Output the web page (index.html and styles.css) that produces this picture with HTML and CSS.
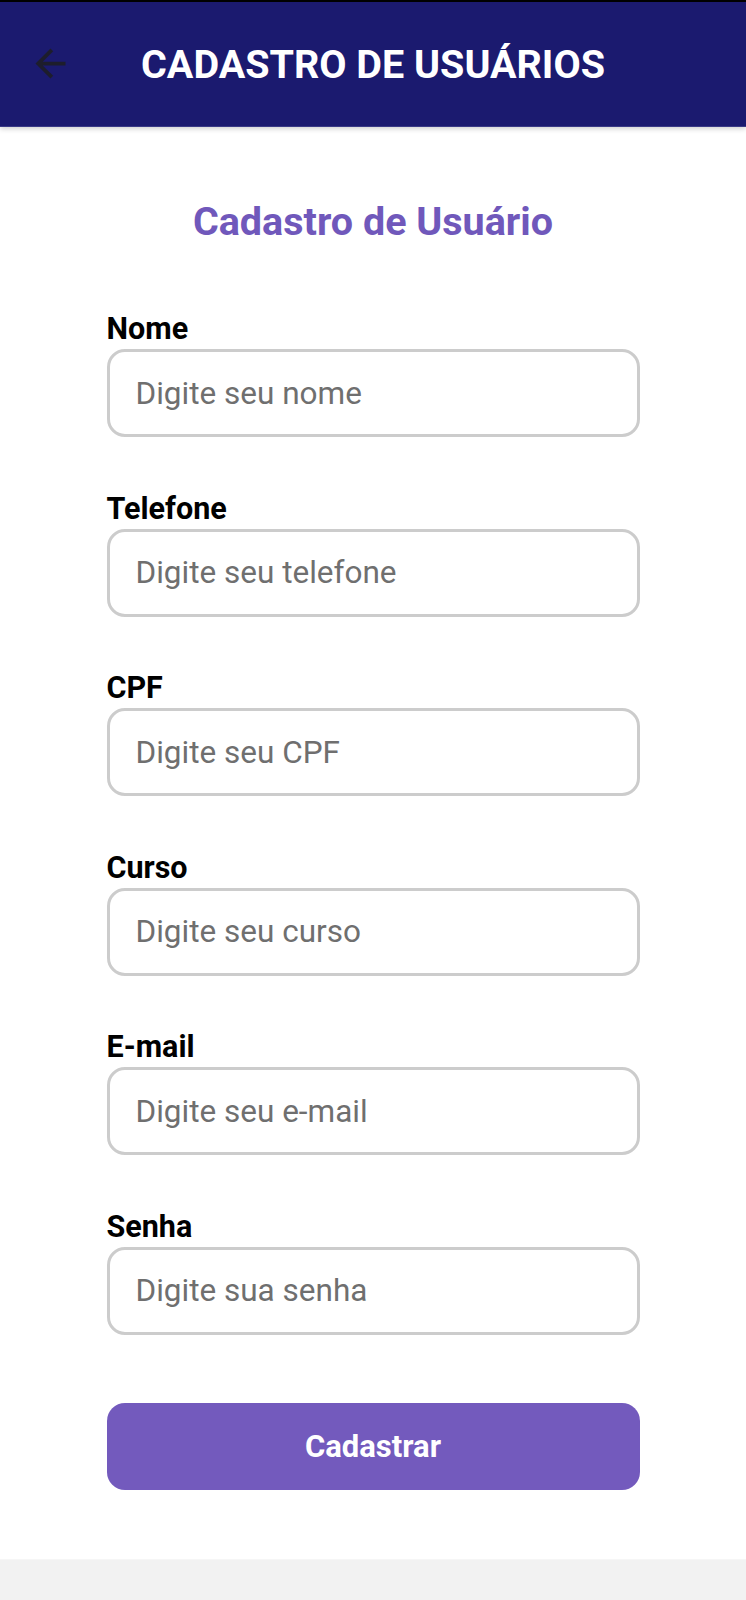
FILE: index.html
```html
<!DOCTYPE html>
<html lang="pt-BR">
<head>
<meta charset="utf-8">
<title>Cadastro de Usuários</title>
<link rel="stylesheet" href="styles.css">
</head>
<body>
<div class="screen">
  <header class="appbar">
    <button class="back" aria-label="Voltar">
      <svg width="45" height="45" viewBox="0 0 24 24"><path d="M20 11H7.83l5.59-5.59L12 4l-8 8 8 8 1.41-1.41L7.83 13H20v-2z" fill="currentColor"/></svg>
    </button>
    <h1 class="appbar-title">CADASTRO DE USUÁRIOS</h1>
    <span class="spacer"></span>
  </header>
  <main class="form">
    <h2 class="form-title">Cadastro de Usuário</h2>
    <div class="fields">
      <label class="field"><span class="label">Nome</span><input class="input" type="text" placeholder="Digite seu nome"></label>
      <label class="field"><span class="label">Telefone</span><input class="input" type="text" placeholder="Digite seu telefone"></label>
      <label class="field"><span class="label">CPF</span><input class="input" type="text" placeholder="Digite seu CPF"></label>
      <label class="field"><span class="label">Curso</span><input class="input" type="text" placeholder="Digite seu curso"></label>
      <label class="field"><span class="label">E-mail</span><input class="input" type="text" placeholder="Digite seu e-mail"></label>
      <label class="field"><span class="label">Senha</span><input class="input" type="password" placeholder="Digite sua senha"></label>
    </div>
    <button class="submit">Cadastrar</button>
  </main>
</div>
</body>
</html>
```
FILE: styles.css
```css
* { box-sizing: border-box; }
html, body { margin: 0; padding: 0; }
body {
  background: #f2f2f2;
  font-family: Roboto, "Liberation Sans", sans-serif;
}
.screen {
  background: #ffffff;
  border-bottom: 1px solid #f6f6f6;
}
.appbar {
  height: 127px;
  background: #1b1a6f;
  border-top: 2px solid #000;
  border-bottom: 1px solid #3a3a86;
  display: grid;
  grid-template-columns: 1fr auto 1fr;
  align-items: center;
  padding-top: 2px;
  box-shadow: 0 2px 5px rgba(0, 0, 0, 0.18);
  position: relative;
  z-index: 1;
}
.back {
  justify-self: start;
  margin-left: 28px;
  margin-top: -4px;
  padding: 0;
  border: 0;
  background: none;
  color: #1d1d2c;
  display: flex;
}
.appbar-title {
  margin: 0;
  color: #ffffff;
  font-size: 39.5px;
  font-weight: 700;
  line-height: 46px;
  white-space: nowrap;
}
.form {
  width: 533px;
  margin: 0 auto;
  padding: 73px 0 69px;
}
.form-title {
  margin: 0 0 68px;
  text-align: center;
  color: #7058bb;
  font-size: 39.5px;
  font-weight: 700;
  line-height: 44px;
}
.fields {
  display: flex;
  flex-direction: column;
  gap: 54.6px;
}
.field {
  display: flex;
  flex-direction: column;
  gap: 3px;
}
.label {
  font-size: 30.5px;
  font-weight: 700;
  line-height: 34px;
  color: #000;
}
.input {
  height: 88px;
  width: 100%;
  border: 3px solid #cccccc;
  border-radius: 18px;
  padding: 0 0 0 26px;
  font-family: Roboto, "Liberation Sans", sans-serif;
  font-size: 31.5px;
  color: #222;
  background: #fff;
  outline: none;
}
.input::placeholder { color: #6f6f6f; }
.submit {
  display: block;
  width: 100%;
  height: 87px;
  margin-top: 68px;
  border: 0;
  border-radius: 18px;
  background: #735abd;
  color: #ffffff;
  font-family: Roboto, "Liberation Sans", sans-serif;
  font-size: 31px;
  font-weight: 700;
}
```
